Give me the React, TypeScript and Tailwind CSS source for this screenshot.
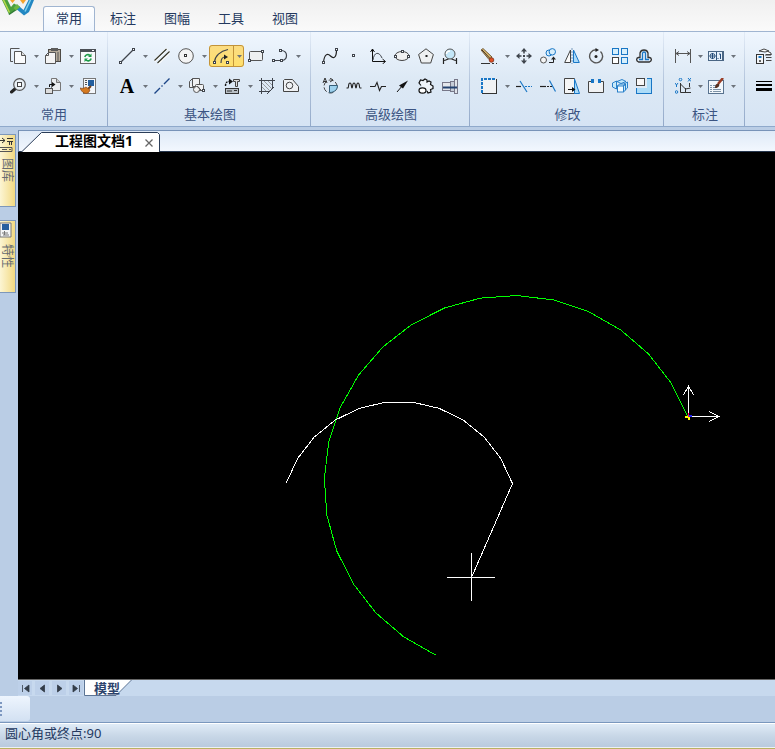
import React from "react";

const INK = "#3f444c";
const NAVY = "#1c4587";
const BLUE = "#1976c5";

/* Small hollow grip used at the ends of drawn entities. */
function Grip({ x, y }: { x: number; y: number }) {
  return <rect x={x + 0.5} y={y + 0.5} width="2" height="2" fill="#fff" stroke={INK} shapeRendering="crispEdges" />;
}

const icons: Record<string, React.ReactNode> = {
  copy: (
    <g fill="#fafbfc" stroke="#555">
      <path d="M3 13.5H.5V.5h9" fill="none" />
      <path d="M4.500 3.500h7l4 4v8h-11z" />
      <path d="M11.500 3.500v4h4" fill="#ddd" />
    </g>
  ),
  paste: (
    <g>
      <rect x="3.500" y="1.500" width="12" height="12" fill="#b5ab9b" stroke="#4d4a45" />
      <rect x="6" y="0" width="7" height="3" fill="#5c5c5c" />
      <path d="M3.500 4.500h7v11H.5v-8z" fill="#f3f3f3" stroke="#555" />
      <path d="M3.500 4.500v3h-3M13 4v9" fill="none" stroke="#555" />
    </g>
  ),
  refresh: (
    <g>
      <rect x=".5" y="1.500" width="15" height="14" fill="#f8f9fb" stroke="#666" shapeRendering="crispEdges" />
      <rect x="0" y="1" width="16" height="3" fill="#4a4f55" />
      <path d="M12 2.500h2" stroke="#fff" />
      <path d="M4.800 9A3.200 3.200 0 0 1 10 7.500M11.200 10.500A3.200 3.200 0 0 1 6 12" fill="none" stroke="#1d9b48" strokeWidth="1.600" />
      <path d="M11.500 5.500V9H8zM4.500 14v-3.500H8z" fill="#1d9b48" />
    </g>
  ),
  zoom: (
    <g>
      <path d="M5.500 10.500L1.500 14" stroke="#222" strokeWidth="3" strokeLinecap="round" />
      <circle cx="9.500" cy="6.500" r="5.800" fill="#e9f0f5" stroke="#555" strokeWidth="1.200" />
      <rect x="7.500" y="4.500" width="4" height="4" fill="#fff" stroke="#444" />
    </g>
  ),
  insert: (
    <g>
      <path d="M6.500 .5h5l4 4v8h-9z" fill="#eceef0" stroke="#777" />
      <path d="M11.500 .5v4h4" fill="#ccc" stroke="#777" />
      <rect x=".5" y="10.500" width="7" height="5" fill="#ddd" stroke="#555" />
      <path d="M4.500 9V6.500H8" fill="none" stroke="#111" />
      <path d="M7 4l3.500 2.500L7 9z" fill="#111" />
    </g>
  ),
  brush: (
    <g>
      <rect x="3.500" y=".5" width="12" height="15" fill="#f4f7fb" stroke="#777" />
      <path d="M5 2.500h2M5 4.500h2M5 6.500h2" stroke="#555" />
      <rect x="8" y="2" width="6" height="6" fill="#245f9e" />
      <path d="M11 8L8 11" stroke="#713f1a" strokeWidth="2" />
      <path d="M0 10c3 1 4 0 6-1l4 3-1 2c-3 3-7 1-9-4z" fill="#d57a20" stroke="#8a481b" strokeWidth=".7" />
    </g>
  ),
  line: (
    <g>
      <path d="M2 14L14 2" stroke={INK} strokeWidth="1.300" />
      <Grip x={0} y={13} />
      <Grip x={13} y={0} />
    </g>
  ),
  parallel: (
    <g>
      <path d="M.5 13L13 .5M4 15.500L15.500 4" stroke="#fff" strokeWidth="2.500" />
      <path d="M.5 12.500L12.500 1M3.500 15L15.500 3.500" stroke="#33352a" strokeWidth="1.200" />
    </g>
  ),
  circle: (
    <g>
      <circle cx="8" cy="8" r="7.300" fill="#f4f4f4" stroke="#555" />
      <rect x="6.500" y="6.500" width="2" height="2" fill="#fff" stroke="#333" shapeRendering="crispEdges" />
    </g>
  ),
  arc: (
    <g fill="none" stroke={INK} strokeWidth="1.200">
      <path d="M1.500 14C2 8 7 3 15 1.500" />
      <path d="M8 15c0-4 1-6 4-6" />
      <path d="M11 6.500l4 2.500-4 2.500z" fill="#222" stroke="none" />
      <Grip x={0} y={13} />
      <Grip x={13} y={13} />
    </g>
  ),
  rect: (
    <g>
      <rect x="1.500" y="3.500" width="13" height="9" rx="1" fill="#eef0f1" stroke="#555" />
      <Grip x={0} y={11} />
      <Grip x={13} y={2} />
    </g>
  ),
  pline: (
    <g fill="none" stroke={INK} strokeWidth="1.200">
      <path d="M1 12.500h9c6-1 6-9 0-10" />
      <Grip x={0} y={11} />
      <Grip x={8} y={11} />
      <Grip x={7} y={1} />
    </g>
  ),
  centerline: <path d="M.5 15.500L6 10M7.500 8.500l1-1M10 6L15.500 .5" stroke={NAVY} strokeWidth="1.400" fill="none" />,
  blockref: (
    <g stroke="#555" fill="#f1f2f3">
      <path d="M3.500 .5h7v8h-7zM.5 3.500l3-3M.5 3.500v6h6" />
      <rect x="6.500" y="6.500" width="8" height="6" rx="1" />
      <circle cx="7.500" cy="11.500" r="3" />
      <path d="M8 8l5 5" fill="none" />
      <Grip x={13} y={11} />
    </g>
  ),
  library: (
    <g>
      <path d="M1.500 8c0-3 1-4.500 4-4.500" fill="none" stroke="#111" strokeWidth="1.400" strokeDasharray="2 1" />
      <path d="M5 .5l4 3-4 3z" fill="#111" />
      <path d="M9.500 1.500h6v2h-2v5h-2v-5h-2z" fill="#ddd" stroke="#444" />
      <rect x="1.500" y="10.500" width="13" height="5" fill="#b9c0c6" stroke="#333" />
      <path d="M3 13h5M10 12.500h3" stroke="#333" />
    </g>
  ),
  hatch: (
    <g>
      <path d="M3 5l8 8M3 9l4 4M5 3l8 8M9 3l4 4" stroke="#888" strokeWidth=".8" />
      <path d="M0 2.500h16M0 13.500h11M2.500 0v16M13.500 0v10M15 9l-7 7" stroke={INK} fill="none" />
    </g>
  ),
  region: (
    <g stroke="#444" fill="#eff1f3">
      <path d="M.5 13.500v-11l1-1h8l6 7v5z" />
      <circle cx="6.500" cy="7.500" r="3.300" />
    </g>
  ),
  spline: (
    <g>
      <path d="M1.500 14c1-8 4-9 7-6s6 2 6-6" stroke="#222" strokeWidth="1.200" fill="none" />
      <Grip x={0} y={13} />
      <Grip x={13} y={0} />
    </g>
  ),
  point: <Grip x={6} y={6} />,
  formula: (
    <g fill="none" stroke="#111">
      <path d="M2.500 1v12.500H15" />
      <path d="M.5 4l2-3 2 3M12.500 11l3 2.500-3 2.500" />
      <path d="M3 12c1-8 6-9 9-2" stroke={INK} />
    </g>
  ),
  ellipse: (
    <g>
      <ellipse cx="8" cy="8" rx="7" ry="4.500" fill="#f0f1f2" stroke="#444" />
      <Grip x={0} y={7} />
      <Grip x={13} y={7} />
      <Grip x={7} y={2} />
    </g>
  ),
  polygon: (
    <g>
      <path d="M8 .8l7.400 5.700L12.700 15H3.300L.6 6.500z" fill="#eef0f1" stroke="#444" />
      <path d="M7.500 8h2" stroke="#222" strokeWidth="2" />
    </g>
  ),
  lens: (
    <g>
      <path d="M1.500 10v6M14.500 10v6M1.500 12.500c3 0 4-2 6.500-2s3.500 2 6.500 2" fill="none" stroke="#222" strokeWidth="1.200" />
      <circle cx="8" cy="6" r="5" fill="#c3e6f8" stroke="#555" />
      <path d="M4.500 6c0-2 1-3 3.500-3" stroke="#fff" strokeWidth="1.500" fill="none" />
    </g>
  ),
  partial: (
    <g>
      <circle cx="8.500" cy="8.500" r="6.500" fill="none" stroke="#444" strokeDasharray="5 2" />
      <path d="M7.500 7.500h8c0 4-3 7-8 7z" fill="#9cd1ee" stroke="#345d77" />
      <path d="M1 5l2-5 2 5M1.500 3.500h3M8 0l3 2-3 2" fill="none" stroke="#333" />
    </g>
  ),
  wave: (
    <path
      d="M.5 10H2c1-1 0-5 2-5s1 5 2 5 0-5 2-5 1 5 2 5 0-5 2-5 1 5 2 5h1.500"
      fill="none"
      stroke="#222"
      strokeWidth="1.100"
    />
  ),
  breakline: <path d="M0 8.500h5l2-4 2.500 8 2-4H16" fill="none" stroke="#222" strokeWidth="1.100" />,
  arrow: (
    <g>
      <path d="M3 14l6-7" stroke="#111" />
      <path d="M14 2.500L5 7.500l4 3z" fill="#111" />
    </g>
  ),
  gear: (
    <g fill="none" stroke="#111" strokeWidth="1.200">
      <path d="M3 7.500L1 5l1.500-3L5 2.500 7 1l2 1v2l2-1 2 1-.5 2.500L15 8v2.500l-2.500 1 .5 2.500-3 1-1-2" fill="#eef3f8" />
      <ellipse cx="4.500" cy="12.500" rx="3.500" ry="2.700" fill="#fff" />
    </g>
  ),
  shaft: (
    <g stroke="#778">
      <rect x=".5" y="4.500" width="8" height="8" fill="#e4e7ec" />
      <rect x="8.500" y="3.500" width="4" height="10" fill="#c6cdd8" />
      <rect x="12.500" y="1.500" width="3" height="14" fill="#e1e5eb" />
      <path d="M1 9.500h14" stroke="#234270" strokeWidth="2" />
    </g>
  ),
  erase: (
    <g>
      <path d="M0 2l2-1.500 9 8.500-3 2.500z" fill="#d8b76c" stroke="#5b4020" strokeWidth=".8" />
      <path d="M1 2l8 8.500" stroke="#3b2c20" />
      <circle cx="10.500" cy="12" r="2.300" fill="#e14f24" stroke="#752f18" strokeWidth=".8" />
      <path d="M0 15.500h9M11 15.500h2M15 15.500h1" stroke="#333" />
    </g>
  ),
  move: (
    <g fill={INK}>
      <path d="M8 0l3 3.500H5zM8 16l3-3.500H5zM0 8l3.500-3v6zM16 8l-3.500-3v6z" />
      <path d="M8 3v2.500M8 10.500V13M3 8h2.500M10.500 8H13" stroke={INK} strokeWidth="1.500" />
      <rect x="7" y="7" width="2" height="2" />
    </g>
  ),
  duplicate: (
    <g fill="#d7edfa" stroke={BLUE}>
      <circle cx="9" cy="5" r="3" />
      <circle cx="12.300" cy="3.800" r="3.200" />
      <circle cx="3.500" cy="12" r="3" fill="#f5f5f5" stroke="#555" />
      <path d="M9 14.500h4.500V11" stroke="#222" fill="none" />
      <path d="M11 11.500l2.500-3 2.500 3z" fill="#222" stroke="none" />
    </g>
  ),
  mirror: (
    <g>
      <path d="M6.500 2v12.500H.7z" fill="#fafafa" stroke="#444" />
      <path d="M9.500 2v12.500h5.800z" fill="#a9dafa" stroke={BLUE} />
      <path d="M8 0v16" stroke="#7799bb" strokeDasharray="2 1" />
    </g>
  ),
  rotate: (
    <g>
      <path d="M8 1.800A6.500 6.500 0 1 0 12.500 3.500" fill="none" stroke="#555" strokeWidth="1.400" />
      <path d="M7.500 0L11 2 7.500 4z" fill="#222" />
      <circle cx="8" cy="8.500" r="1.500" fill="#222" />
    </g>
  ),
  array: (
    <g stroke={BLUE} fill="#d6effc" shapeRendering="crispEdges">
      <rect x=".5" y=".5" width="6" height="6" />
      <rect x="9.500" y=".5" width="6" height="6" />
      <rect x=".5" y="9.500" width="6" height="6" fill="#fff" stroke="#444" />
      <rect x="9.500" y="9.500" width="6" height="6" />
    </g>
  ),
  offset: (
    <g fill="none">
      <path d="M2.500 14h11c2.500-1 2.500-4 0-4.500H12V5c-1-4-7-4-8 0v4.500H2.500c-2.500.5-2.500 3.500 0 4.500z" stroke="#333" strokeWidth="1.300" />
      <path d="M3 11.500h3.500V5.500c0-2 3-2 3 0v6H13" stroke={BLUE} strokeWidth="1.300" />
    </g>
  ),
  stretch: (
    <g shapeRendering="crispEdges">
      <rect x="1" y="1" width="14" height="14" fill="#f0f2f4" />
      <path d="M15.500 1v14.500H1" fill="none" stroke="#333" />
      <path d="M1 15V1h14" fill="none" stroke={BLUE} strokeWidth="2" strokeDasharray="3 1" />
    </g>
  ),
  trim: (
    <g fill="none">
      <path d="M0 8.500h5" stroke="#222" strokeWidth="1.200" />
      <path d="M4 3l7 11" stroke={BLUE} strokeWidth="1.200" />
      <path d="M9 8.500h7" stroke={BLUE} strokeDasharray="2 1" />
    </g>
  ),
  extend: (
    <g fill="none">
      <path d="M0 8.500h6" stroke="#222" strokeWidth="1.200" />
      <path d="M7 8.500h5" stroke="#222" strokeDasharray="2 1" />
      <path d="M9.500 2.500l6 11" stroke={BLUE} strokeWidth="1.200" />
    </g>
  ),
  draft: (
    <g>
      <path d="M10.500 .5H.5v15h10z" fill="#f5f5f5" stroke="#444" />
      <path d="M10.500 1l5 14.500h-5z" fill="#abdcfa" stroke={BLUE} />
      <path d="M4 11.500h5" stroke="#111" />
      <path d="M8 9l3.500 2.500L8 14z" fill="#111" />
    </g>
  ),
  breakAt: (
    <g>
      <path d="M.5 3.500v11h15v-11z" fill="#f1f2f3" />
      <path d="M3 3.500H.5v11h15v-11H13" fill="none" stroke="#444" />
      <path d="M3 1h3v4H3zM10 1h3v4h-3z" fill={BLUE} />
    </g>
  ),
  explode: (
    <g fill="#c8eafa" stroke={BLUE} strokeWidth=".9">
      <path d="M.5 5l4-2v8l-4-2zM5 3.500l5-2 4 2-5 2zM12 6l3.500-2v6l-3.500 3z" />
      <path d="M5.500 8l2-2h6l-2 2M11.500 8l2-2v6l-2 2" />
      <rect x="5.500" y="8" width="6" height="6" fill="#f3fbff" />
    </g>
  ),
  scale: (
    <g>
      <rect x=".5" y=".5" width="15" height="15" fill="#acdcf8" stroke={BLUE} />
      <rect x="0" y="0" width="11" height="10" fill="#dfeaf5" />
      <rect x=".5" y=".5" width="8" height="7" fill="#f8f8f8" stroke="#444" />
    </g>
  ),
  dimension: (
    <g stroke="#555" fill="none">
      <path d="M.5 1v14M15.500 1v14M1 5.500h14" shapeRendering="crispEdges" />
      <path d="M4 3.500l-3 2 3 2M12 3.500l3 2-3 2" />
    </g>
  ),
  tolerance: (
    <g>
      <rect x=".5" y="3.500" width="15" height="9" fill="#e7f2fc" stroke="#4a6684" />
      <path d="M8.500 4v8M1.500 8h6" stroke="#34587f" />
      <circle cx="4.500" cy="8" r="2.500" fill="none" stroke="#34587f" />
      <path d="M4.500 5v6M11 6h1.500v5M9.500 10.500h1" stroke="#234b7a" fill="none" />
      <rect x="14" y="4" width="1" height="8" fill="#4a6684" />
    </g>
  ),
  coordinate: (
    <g fill="none" stroke={BLUE}>
      <circle cx="5.500" cy="1.500" r="1.300" />
      <path d="M13 0l3 3.500M16 0l-3 3.500M0 5l1.500 2L3 5M1.500 7v2" />
      <circle cx="1.500" cy="14" r="1.300" />
      <path d="M5.500 5v9.500H16M5.500 6l5 5 5-1M10.500 14v-4M14.500 5v4" stroke="#333" />
    </g>
  ),
  styleEdit: (
    <g>
      <rect x=".5" y="2.500" width="15" height="13" fill="#f3f8fc" stroke="#59738f" />
      <path d="M2 7.500h2M5 7.500h3M2 9.500h2M5 9.500h4M2 11.500h2M5 11.500h8M2 13.500h2M5 13.500h8" stroke="#60788f" strokeWidth=".8" />
      <path d="M15 0l-5 6" stroke="#9a3d25" strokeWidth="2.500" />
      <path d="M7 10c0-4 2-5 4-4 1 2-1 4-4 4z" fill="#573120" />
    </g>
  ),
  layers: (
    <g>
      <path d="M3 3l5-2 5 2-4 1zM12 3.500l3 1.500v2H9M10 9.500h5.500M10 12.500h5.500M10 6.500h5.500" fill="#fff" stroke="#444" />
      <rect x=".5" y="6.500" width="7" height="9" fill="#f3f5f7" stroke="#333" />
      <path d="M2.500 9h3" stroke={BLUE} strokeWidth="2" />
      <circle cx="4" cy="13" r="1" fill="#333" />
    </g>
  ),
  lineweight: <path d="M0 3h16v1H0zM0 6h16v2H0zM0 10h16v3H0z" fill="#000" />,
};

function Caret() {
  return (
    <svg width="5" height="3" viewBox="0 0 5 3" aria-hidden="true">
      <path d="M0 0h5L2.500 3z" fill="#6d737b" />
    </svg>
  );
}

type ToolDef = { icon: string; label: string; menu?: boolean; active?: boolean };
type GroupDef = { title: string; box: string; arrow: string; rows: ToolDef[][] };

const t = (icon: string, label: string, menu = false, active = false): ToolDef => ({ icon, label, menu, active });

const groups: GroupDef[] = [
  {
    title: "常用",
    box: "w-[108px] pl-1.5",
    arrow: "w-[11px]",
    rows: [
      [t("copy", "复制", true), t("paste", "粘贴", true), t("refresh", "重生成")],
      [t("zoom", "缩放", true), t("insert", "插入", true), t("brush", "特性匹配")],
    ],
  },
  {
    title: "基本绘图",
    box: "w-[203px] pl-[7px]",
    arrow: "w-[11px]",
    rows: [
      [t("line", "直线", true), t("parallel", "平行线"), t("circle", "圆", true), t("arc", "圆弧", true, true), t("rect", "矩形"), t("pline", "多段线", true)],
      [t("text", "文字", true), t("centerline", "中心线", true), t("blockref", "块", true), t("library", "图库", true), t("hatch", "剖面线"), t("region", "填充")],
    ],
  },
  {
    title: "高级绘图",
    box: "w-[159px] pl-[7px]",
    arrow: "w-[11px]",
    rows: [
      [t("spline", "样条"), t("point", "点"), t("formula", "公式曲线"), t("ellipse", "椭圆"), t("polygon", "正多边形"), t("lens", "圆弧拟合")],
      [t("partial", "局部放大"), t("wave", "波浪线"), t("breakline", "双折线"), t("arrow", "箭头"), t("gear", "齿轮"), t("shaft", "孔/轴")],
    ],
  },
  {
    title: "修改",
    box: "w-[194px] pl-[7px]",
    arrow: "w-[11px]",
    rows: [
      [t("erase", "删除", true), t("move", "平移"), t("duplicate", "平移复制"), t("mirror", "镜像"), t("rotate", "旋转"), t("array", "阵列"), t("offset", "等距线")],
      [t("stretch", "拉伸", true), t("trim", "裁剪"), t("extend", "延伸"), t("draft", "过渡"), t("breakAt", "打断"), t("explode", "分解"), t("scale", "缩放")],
    ],
  },
  {
    title: "标注",
    box: "w-[81px] pl-[7px]",
    arrow: "w-[9px]",
    rows: [
      [t("dimension", "尺寸标注", true), t("tolerance", "形位公差", true)],
      [t("coordinate", "坐标标注", true), t("styleEdit", "标注编辑", true)],
    ],
  },
];

function Tool({ def, arrow }: { def: ToolDef; arrow: string }) {
  const frame = def.active
    ? "rounded-[3px] bg-linear-to-b from-[#fbdc83] to-[#ffe06a] outline outline-1 -outline-offset-1 outline-[#c2933a]"
    : "";
  const split = def.active ? "border-l border-[#c2933a]" : "pl-0.5";
  return (
    <div className={`flex h-[22px] shrink-0 ${frame}`}>
      <button type="button" aria-label={def.label} className="flex w-6 items-center justify-center">
        {def.icon === "text" ? (
          <span className="font-['Liberation_Serif',serif] text-[20px] leading-[22px] font-bold text-black">A</span>
        ) : (
          <svg width="16" height="16" viewBox="0 0 16 16" aria-hidden="true">
            {icons[def.icon]}
          </svg>
        )}
      </button>
      {def.menu && (
        <button type="button" aria-label={`${def.label}菜单`} className={`flex items-center justify-center ${arrow} ${split}`}>
          <Caret />
        </button>
      )}
    </div>
  );
}

function Ribbon() {
  return (
    <div className="flex h-[95px] overflow-hidden border-b border-[#8fa9cb] bg-linear-to-b from-[#eff6fe] via-[#dde9f5] to-[#d6e4f4]">
      {groups.map((g) => (
        <div key={g.title} className="flex shrink-0">
          <section aria-label={g.title} className={`-mr-px flex flex-col pt-[13px] ${g.box}`}>
            <div className="flex flex-col gap-2">
              {g.rows.map((row, i) => (
                <div key={i} className="flex">
                  {row.map((def) => (
                    <Tool key={def.icon} def={def} arrow={g.arrow} />
                  ))}
                </div>
              ))}
            </div>
            <h2 className="mt-[7px] pr-1.5 text-center text-[13px] leading-5 text-[#3b5482]">{g.title}</h2>
          </section>
          <div className="w-px bg-linear-to-b from-[#e3ecf7] via-[#b5c6dd] to-[#93a9c9]" />
        </div>
      ))}
      <section aria-label="属性" className="flex shrink-0 flex-col gap-2 pt-[13px] pl-[7px]">
        <Tool def={t("layers", "图层")} arrow="w-[11px]" />
        <Tool def={t("lineweight", "线宽")} arrow="w-[11px]" />
      </section>
    </div>
  );
}

function Header() {
  return (
    <header className="flex h-8 items-end border-b border-[#a0b5d1] bg-linear-to-b from-[#f0f0f0] to-[#fafafa]">
      <svg className="w-[43px] self-start" height="18" viewBox="0 0 43 18" role="img" aria-label="CAD">
        <path d="M2 0L9 14.500L20 7L14 3.500L11 7L7.500 0z" fill="#4a9f3c" />
        <path d="M3.500 0L9.500 12.500" stroke="#b7d64a" strokeWidth="1.500" />
        <path d="M9 14.500L20 7" stroke="#2f7a35" strokeWidth="1.500" />
        <path d="M28.500 0H34L29 12L24 15.500L14 7L17 4.500L23.500 10z" fill="#2287c2" />
        <path d="M30.500 0L25 11.500" stroke="#7fd0ee" strokeWidth="1.500" />
        <path d="M13.500 8L17 4L20 7L16 10.500z" fill="#6db743" />
        <path d="M10 0h5l-2.500 3zM20 0h6l-3 4z" fill="#f5a32c" />
      </svg>
      <nav className="flex">
        <button type="button" aria-current="page" className="mr-px -mb-px h-[25px] w-[52px] rounded-t-[3px] border border-b-0 border-[#a0b5d1] bg-linear-to-b from-white to-[#eff6fe] text-[13px] text-[#24395f]">
          常用
        </button>
        {["标注", "图幅", "工具", "视图"].map((name) => (
          <button key={name} type="button" className="h-[25px] w-[54px] text-[13px] text-[#24395f]">
            {name}
          </button>
        ))}
      </nav>
    </header>
  );
}

function DockTab({ name, icon }: { name: string; icon: React.ReactNode }) {
  return (
    <button type="button" className="flex h-[73px] w-4 flex-col items-start border border-l-0 border-[#7d97ba] bg-linear-to-r from-[#fcf5d3] to-[#f2d980]">
      <svg className="mt-px" width="13" height="16" viewBox="0 0 13 16" aria-hidden="true">
        {icon}
      </svg>
      <span className="mt-1.5 text-[12px] leading-[14px] text-[#666b72] [text-orientation:sideways] [writing-mode:vertical-rl]">
        {name}
      </span>
    </button>
  );
}

/* The view draws arcs as chords; angles are in degrees, counter-clockwise from +X. */
function chords(cx: number, cy: number, r: number, from: number, to: number, count: number) {
  return Array.from({ length: count + 1 }, (_, i) => {
    const a = ((from + ((to - from) * i) / count) * Math.PI) / 180;
    return `${(cx + r * Math.cos(a)).toFixed(1)},${(cy - r * Math.sin(a)).toFixed(1)}`;
  }).join(" ");
}

function Canvas() {
  return (
    <svg className="block min-h-0 w-full flex-1 bg-black" viewBox="18 152 757 527" preserveAspectRatio="xMinYMin slice" role="img" aria-label="绘图区" fill="none" shapeRendering="crispEdges">
      <polyline points={chords(512.2, 483.4, 188, 21, 246, 20)} stroke="#00ff00" />
      <polyline points={chords(399.2, 520.4, 119, 161.700, 18.300, 11)} stroke="#fff" />
      <path d="M512.500 483.500L471.500 577.500" stroke="#fff" />
      <path d="M447 577.500h48M471.500 553v48" stroke="#fff" />
      <path d="M688.500 416V386M683.500 395l5-9 5 9M689 416.500h30M709 411.500l10 5-10 5" stroke="#fff" />
      <path d="M685 416.500h3M688.500 417v3" stroke="#ff0" strokeWidth="2" />
      <path d="M689 416h3" stroke="#22f" strokeWidth="2" />
      <path d="M688.500 413v4" stroke="#f06" />
    </svg>
  );
}

const sheetNav = [
  { label: "第一页", d: "M1.500 1v7M8 1v7L3.500 4.500z" },
  { label: "上一页", d: "M6.500 1v7L2 4.500z" },
  { label: "下一页", d: "M2.500 1v7L7 4.500z" },
  { label: "最后一页", d: "M7.500 1v7M1 1v7l4.500-3.500z" },
];

export default function App() {
  return (
    <div className="flex h-screen flex-col overflow-hidden bg-[#bacde5] font-['Noto_Sans','Noto_Sans_CJK_SC',sans-serif]">
      <Header />
      <Ribbon />
      <div className="flex min-h-0 flex-1 pt-[3px]">
        <aside className="flex w-[18px] shrink-0 flex-col gap-[13px] pt-1">
          <DockTab
            name="图库"
            icon={
              <g fill="none" stroke="#555">
                <path d="M0 4.500h5M2 2l3 2.500L2 7M7 2.500h6M7 5.500h6M9.500 5v4M11.500 5v4" stroke="#333" />
                <path d="M0 11.500h12v4H0M2 13.500h5M9 13.500h2" />
              </g>
            }
          />
          <DockTab
            name="特性"
            icon={
              <g>
                <path d="M0 1h11v14H0z" fill="#f4f5f6" stroke="#777" />
                <path d="M2 2h7v6H2z" fill="#285f9f" />
                <path d="M2 11h6M3 13h6M4.500 9v4" stroke="#777" />
              </g>
            }
          />
        </aside>
        <main className="flex min-w-0 flex-1 flex-col">
          <div className="flex h-[22px] shrink-0 border-t border-b border-l border-t-[#7893b8] border-b-[#26364d] border-l-[#6f89ad] bg-linear-to-b from-[#dfeaf7] to-[#f2f7fe] pt-px pl-0.5">
            <div className="relative -mb-px flex h-5 w-[139px] items-start">
              <svg className="absolute inset-0" width="139" height="20" viewBox="0 0 139 20" aria-hidden="true">
                <path d="M.5 20L20.500 .5H136.500L138.500 2.500V20" fill="#fff" stroke="#2b3d58" />
              </svg>
              <span className="relative pl-[34px] text-[14px] leading-[18px] font-bold text-black">工程图文档1</span>
              <button type="button" aria-label="关闭" className="relative ml-3 flex h-[22px] items-center">
                <svg width="8" height="8" viewBox="0 0 8 8" aria-hidden="true">
                  <path d="M.5 .5l7 7M7.500 .5l-7 7" stroke="#666" strokeWidth="1.300" />
                </svg>
              </button>
            </div>
          </div>
          <Canvas />
          <div className="flex h-[17px] shrink-0 border-t border-[#666] bg-[#c7d9ee]">
            <div className="flex w-[66px] gap-[3px] pt-px">
              {sheetNav.map((n) => (
                <button key={n.label} type="button" aria-label={n.label} className="flex h-3.5 w-3.5 items-center justify-center bg-[#bdd0e9]">
                  <svg width="9" height="9" viewBox="0 0 9 9" aria-hidden="true">
                    <path d={n.d} fill="#333c48" stroke="#333c48" strokeWidth=".8" />
                  </svg>
                </button>
              ))}
            </div>
            <button type="button" className="relative flex h-4 w-12 items-center pl-2.5 text-[13px] leading-4 font-bold text-[#2c426b]">
              <svg className="absolute inset-0" width="48" height="16" viewBox="0 0 48 16" aria-hidden="true">
                <path d="M.5 0V15.500H32L47.500 0" fill="#fff" stroke="#5c7494" />
              </svg>
              <span className="relative">模型</span>
            </button>
          </div>
        </main>
      </div>
      <div className="h-[26px] shrink-0">
        <div className="flex h-[25px] w-[30px] items-center rounded-r-[3px] bg-linear-to-b from-[#eef5fe] to-[#d3e1f2]">
          <div className="h-3.5 w-0.5 border-r-2 border-dotted border-[#7d97c0]" />
        </div>
      </div>
      <footer className="flex h-[27px] shrink-0 flex-col border-t border-[#7a97bd] bg-linear-to-b from-[#e2edf8] via-[#c8d7e7] to-[#b7c8dc]">
        <p className="h-6 border-t border-white pl-[5px] text-[13px] leading-[18px] text-[#24395f]">圆心角或终点:90</p>
        <div className="h-px bg-[#eef1f4]" />
        <div className="h-px bg-[#b9b162]" />
      </footer>
    </div>
  );
}
